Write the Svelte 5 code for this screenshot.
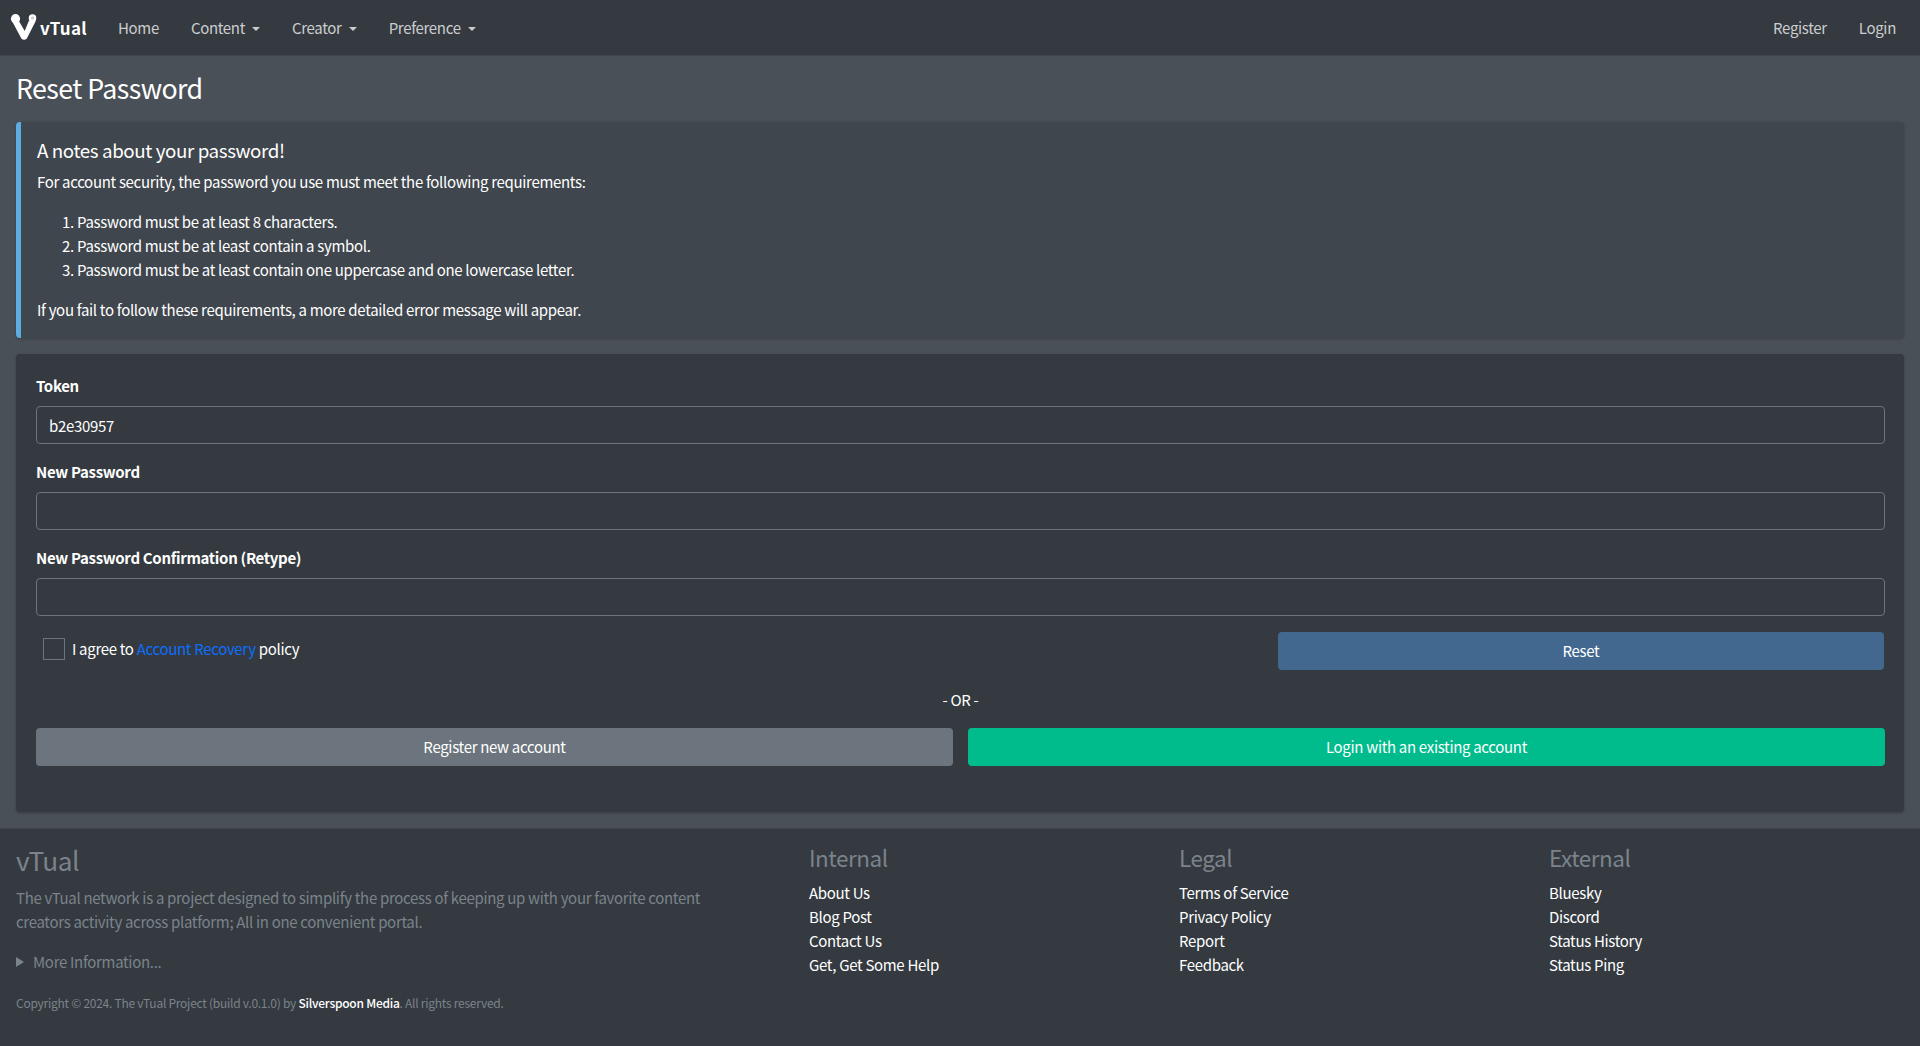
<script>
  const navItems = [
    { label: 'Home' },
    { label: 'Content', caret: true },
    { label: 'Creator', caret: true },
    { label: 'Preference', caret: true }
  ]
  const requirements = [
    'Password must be at least 8 characters.',
    'Password must be at least contain a symbol.',
    'Password must be at least contain one uppercase and one lowercase letter.'
  ]
  const footerColumns = [
    { title: 'Internal', links: ['About Us', 'Blog Post', 'Contact Us', 'Get, Get Some Help'] },
    { title: 'Legal', links: ['Terms of Service', 'Privacy Policy', 'Report', 'Feedback'] },
    { title: 'External', links: ['Bluesky', 'Discord', 'Status History', 'Status Ping'] }
  ]
</script>

<div class="page">
  <nav class="navbar">
    <a class="brand" href="#home">
      <svg width="28" height="28" viewBox="10 12 28 28" aria-hidden="true">
        <path d="M12.5 22 L21.5 38.8 Q24 40.5 26.7 38.8 L36 20.5 L29 20.5 L24.7 31 L19.2 21.5 Z" fill="#fff" />
        <circle cx="15.5" cy="18.7" r="4.6" fill="#fff" />
        <circle cx="32.5" cy="18" r="3.8" fill="#fff" />
        <circle cx="32.5" cy="18" r="1.6" fill="#c9cbcd" />
      </svg>
      <span>vTual</span>
    </a>
    <ul class="nav">
      {#each navItems as item}
        <li class:caret={item.caret}>{item.label}</li>
      {/each}
    </ul>
    <ul class="nav right">
      <li>Register</li>
      <li>Login</li>
    </ul>
  </nav>

  <main>
    <h1>Reset Password</h1>

    <section class="callout">
      <h5>A notes about your password!</h5>
      <p>For account security, the password you use must meet the following requirements:</p>
      <ol>
        {#each requirements as req}
          <li>{req}</li>
        {/each}
      </ol>
      <p>If you fail to follow these requirements, a more detailed error message will appear.</p>
    </section>

    <form class="card">
      <label for="token">Token</label>
      <input id="token" type="text" value="b2e30957" />
      <label for="password">New Password</label>
      <input id="password" type="password" />
      <label for="confirm">New Password Confirmation (Retype)</label>
      <input id="confirm" type="password" />

      <div class="agree-row">
        <div class="agree">
          <span class="checkbox"></span>
          <span>I agree to <a href="#recovery">Account Recovery</a> policy</span>
        </div>
        <button type="button" class="btn reset">Reset</button>
      </div>

      <div class="or">- OR -</div>

      <div class="alt-row">
        <button type="button" class="btn secondary">Register new account</button>
        <button type="button" class="btn success">Login with an existing account</button>
      </div>
    </form>
  </main>

  <footer>
    <div class="footer-grid">
      <div class="about">
        <h4 class="brand-title">vTual</h4>
        <p>The vTual network is a project designed to simplify the process of keeping up with your favorite content creators activity across platform; All in one convenient portal.</p>
        <div class="more"><span class="triangle"></span>More Information...</div>
      </div>
      {#each footerColumns as col}
        <div class="links">
          <h5>{col.title}</h5>
          <ul>
            {#each col.links as link}
              <li>{link}</li>
            {/each}
          </ul>
        </div>
      {/each}
    </div>
    <small>Copyright © 2024. The vTual Project (build v.0.1.0) by <b>Silverspoon Media</b>. All rights reserved.</small>
  </footer>
</div>

<style>
  :global(body) {
    margin: 0;
    background: #343a40;
    color: #fff;
  }

  .page {
    font-family: "Noto Sans CJK JP", "Noto Sans", sans-serif;
    font-size: 15px;
    line-height: 24px;
  }

  /* the stack runs wider than the original face, so every text element tightens a little */
  .page :global(*) {
    letter-spacing: -0.0213em;
  }

  /* Navbar */
  .navbar {
    height: 56px;
    box-sizing: border-box;
    display: flex;
    align-items: center;
    padding: 0 8px 0 10px;
    background: #343a40;
    border-bottom: 1px solid #3f464d;
  }

  .brand {
    display: flex;
    align-items: center;
    color: #fff;
    text-decoration: none;
    font-weight: 700;
    font-size: 17px;
    margin-right: 15px;
  }

  .brand svg {
    margin: -3px 2px 0 0;
  }

  .brand span {
    letter-spacing: 0.3px;
  }

  .nav {
    display: flex;
    list-style: none;
    margin: 0;
    padding: 0;
    color: rgba(255, 255, 255, 0.75);
  }

  .nav li {
    padding: 0 16px;
  }

  .nav.right {
    margin-left: auto;
  }

  .caret::after {
    content: "";
    display: inline-block;
    margin-left: 7px;
    vertical-align: 3px;
    border-top: 4px solid;
    border-left: 4px solid transparent;
    border-right: 4px solid transparent;
  }

  /* Main */
  main {
    background: #495057;
    padding: 0 16px 16px;
  }

  h1 {
    margin: 0;
    padding: 14px 0 16px;
    font-size: 26.75px;
    line-height: 36px;
    font-weight: 400;
  }

  .callout {
    background: #3f464d;
    border-left: 5px solid #5dade2;
    border-radius: 4px;
    padding: 16px 15px 16px 16px;
    box-shadow: 0 1px 3px rgba(0, 0, 0, 0.2);
    margin-bottom: 16px;
  }

  .callout h5 {
    margin: 0 0 8px;
    font-size: 18.75px;
    line-height: 24px;
    font-weight: 400;
  }

  .callout p {
    margin: 0;
  }

  .callout ol {
    margin: 16px 0;
    padding-left: 40px;
  }

  .card {
    background: #343a40;
    border-radius: 4px;
    padding: 20px 19px 20px 20px;
    height: 458px;
    box-sizing: border-box;
    box-shadow: 0 1px 3px rgba(0, 0, 0, 0.25);
  }

  label {
    display: block;
    font-weight: 700;
    margin-bottom: 8px;
  }

  input {
    display: block;
    width: 100%;
    box-sizing: border-box;
    height: 38px;
    padding: 6px 12px;
    margin-bottom: 16px;
    background: #343a40;
    color: #fff;
    border: 1px solid #6c757d;
    border-radius: 4px;
    font: inherit;
  }

  .agree-row {
    display: grid;
    grid-template-columns: 1fr 606px;
    margin-right: 1px;
  }

  .agree {
    display: flex;
    align-items: center;
    gap: 7px;
    padding: 0 0 4px 7px;
    height: 34px;
  }

  .checkbox {
    width: 20px;
    height: 20px;
    border: 1px solid #6c757d;
  }

  .agree a {
    color: #0d6efd;
    text-decoration: none;
  }

  .btn {
    height: 38px;
    border: 0;
    border-radius: 4px;
    color: #fff;
    font: inherit;
  }

  .reset {
    background: #426890;
  }

  .or {
    text-align: center;
    margin: 18px 0 16px;
    line-height: 24px;
  }

  .alt-row {
    display: grid;
    grid-template-columns: 1fr 1fr;
    gap: 15px;
  }

  .secondary {
    background: #6c757d;
  }

  .success {
    background: #00bc8c;
  }

  /* Footer */
  footer {
    background: #343a40;
    border-top: 1px solid #3f464d;
    padding: 14px 16px 0;
    height: 218px;
    box-sizing: border-box;
  }

  .footer-grid {
    display: grid;
    grid-template-columns: 793px 370px 370px 1fr;
  }

  .brand-title {
    margin: 0 0 9px;
    font-size: 26.25px;
    line-height: 34px;
    font-weight: 400;
    color: #7b838b;
  }

  .about p {
    margin: 0 0 16px;
    max-width: 700px;
    color: #7b838b;
  }

  .more {
    color: #7b838b;
    display: flex;
    align-items: center;
  }

  .triangle {
    width: 0;
    height: 0;
    margin-right: 9px;
    border-left: 8px solid;
    border-top: 5px solid transparent;
    border-bottom: 5px solid transparent;
  }

  .links h5 {
    margin: 0 0 9px;
    font-size: 22.5px;
    line-height: 29px;
    font-weight: 400;
    color: #7b838b;
  }

  .links ul {
    list-style: none;
    margin: 0;
    padding: 0;
  }

  small {
    display: block;
    margin-top: 14px;
    font-size: 12px;
    color: #7b838b;
  }

  small b {
    font-weight: 500;
    color: #fff;
  }
</style>
